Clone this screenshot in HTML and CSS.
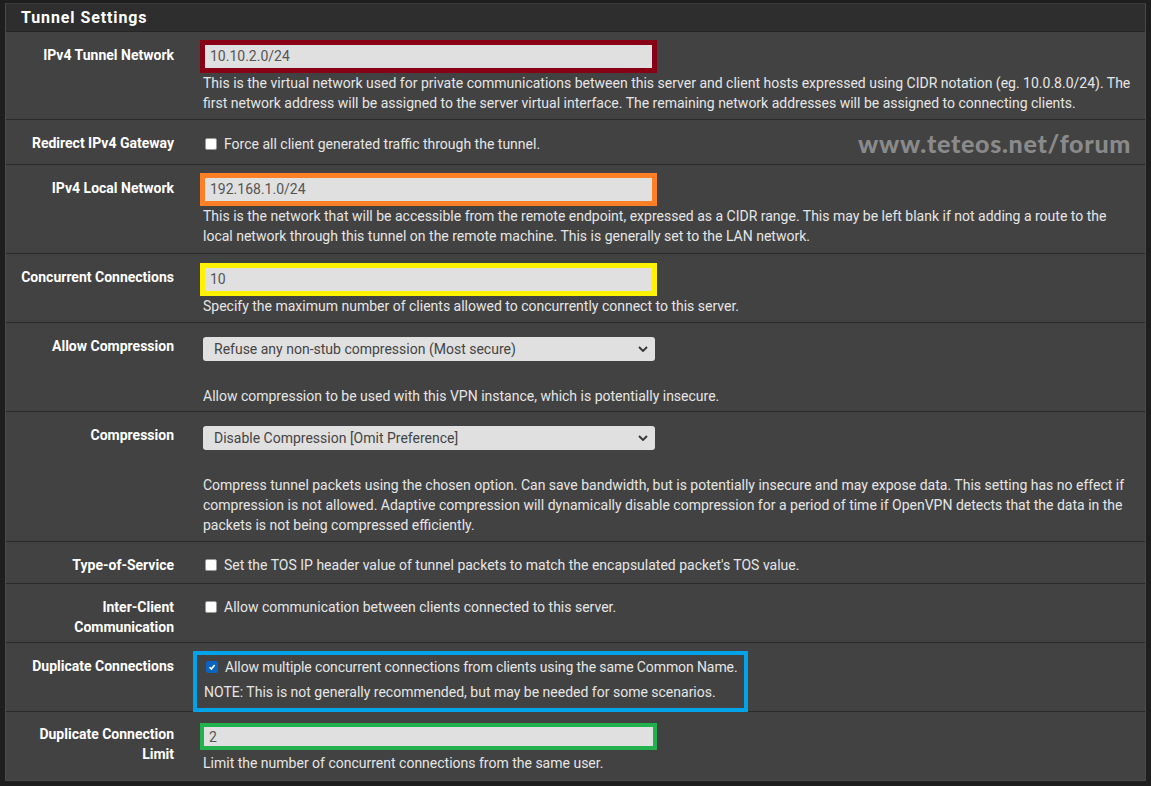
FILE: index.html
```html
<!DOCTYPE html>
<html>
<head>
<meta charset="utf-8">
<link rel="stylesheet" href="styles.css">
</head>
<body>
<div class="panel">
  <div class="panel-heading">Tunnel Settings</div>
  <div class="panel-body">
    <div class="watermark">www.teteos.net/forum</div>

    <div class="row">
      <div class="label">IPv4 Tunnel Network</div>
      <div class="field">
        <div class="mark mark-red"><div class="input">10.10.2.0/24</div></div>
        <div class="help">This is the virtual network used for private communications between this server and client hosts expressed using CIDR notation (eg. 10.0.8.0/24). The first network address will be assigned to the server virtual interface. The remaining network addresses will be assigned to connecting clients.</div>
      </div>
    </div>

    <div class="row row-check row-redirect">
      <div class="label">Redirect IPv4 Gateway</div>
      <div class="field">
        <div class="check-line"><span class="box"></span>Force all client generated traffic through the tunnel.</div>
      </div>
    </div>

    <div class="row row-local">
      <div class="label">IPv4 Local Network</div>
      <div class="field">
        <div class="mark mark-orange"><div class="input">192.168.1.0/24</div></div>
        <div class="help">This is the network that will be accessible from the remote endpoint, expressed as a CIDR range. This may be left blank if not adding a route to the local network through this tunnel on the remote machine. This is generally set to the LAN network.</div>
      </div>
    </div>

    <div class="row row-conc">
      <div class="label">Concurrent Connections</div>
      <div class="field">
        <div class="mark mark-yellow"><div class="input">10</div></div>
        <div class="help">Specify the maximum number of clients allowed to concurrently connect to this server.</div>
      </div>
    </div>

    <div class="row row-allow">
      <div class="label">Allow Compression</div>
      <div class="field">
        <div class="select"><span>Refuse any non-stub compression (Most secure)</span><svg class="chev" viewBox="0 0 10 6" width="10" height="6"><path d="M1 1l4 4 4-4" fill="none" stroke="#333" stroke-width="1.8"/></svg></div>
        <div class="help help-spaced">Allow compression to be used with this VPN instance, which is potentially insecure.</div>
      </div>
    </div>

    <div class="row">
      <div class="label">Compression</div>
      <div class="field">
        <div class="select"><span>Disable Compression [Omit Preference]</span><svg class="chev" viewBox="0 0 10 6" width="10" height="6"><path d="M1 1l4 4 4-4" fill="none" stroke="#333" stroke-width="1.8"/></svg></div>
        <div class="help help-spaced">Compress tunnel packets using the chosen option. Can save bandwidth, but is potentially insecure and may expose data. This setting has no effect if compression is not allowed. Adaptive compression will dynamically disable compression for a period of time if OpenVPN detects that the data in the packets is not being compressed efficiently.</div>
      </div>
    </div>

    <div class="row row-check">
      <div class="label">Type-of-Service</div>
      <div class="field">
        <div class="check-line"><span class="box"></span>Set the TOS IP header value of tunnel packets to match the encapsulated packet's TOS value.</div>
      </div>
    </div>

    <div class="row row-tall">
      <div class="label">Inter-Client Communication</div>
      <div class="field">
        <div class="check-line"><span class="box"></span>Allow communication between clients connected to this server.</div>
      </div>
    </div>

    <div class="row row-dup">
      <div class="label">Duplicate Connections</div>
      <div class="field">
        <div class="mark-blue">
          <div class="check-line check-tight"><span class="box box-on"><svg viewBox="0 0 12 12" width="12" height="12"><path d="M3 6.2l2.2 2.3L9.2 3.6" fill="none" stroke="#fff" stroke-width="1.8"/></svg></span>Allow multiple concurrent connections from clients using the same Common Name.</div>
          <div class="note">NOTE: This is not generally recommended, but may be needed for some scenarios.</div>
        </div>
      </div>
    </div>

    <div class="row row-last">
      <div class="label">Duplicate Connection Limit</div>
      <div class="field">
        <div class="mark mark-green"><div class="input input-short">2</div></div>
        <div class="help help-last">Limit the number of concurrent connections from the same user.</div>
      </div>
    </div>
  </div>
</div>
</body>
</html>
```

FILE: styles.css
```css
html, body {
  margin: 0;
  padding: 0;
  background: #1e1e1e;
}
body {
  padding: 3px 5px 6px 5px;
  font-family: Roboto, "Liberation Sans", sans-serif;
  font-size: 14px;
  color: #e6e6e6;
}
.panel {
  border: 1px solid #4a4a4a;
  border-top-color: #3a3a3a;
  background: #424242;
}
.panel-heading {
  background: #2e2e2e;
  color: #ffffff;
  font-weight: 700;
  font-size: 16px;
  letter-spacing: 0.9px;
  height: 27px;
  line-height: 27px;
  padding-left: 15px;
  border-bottom: 1px solid #262626;
}
.panel-body {
  position: relative;
}
.watermark {
  position: absolute;
  top: 96px;
  left: 852px;
  font-family: Lato, "DejaVu Sans", sans-serif;
  font-weight: 900;
  font-size: 25px;
  letter-spacing: 0.7px;
  color: #8a8a8a;
  line-height: 30px;
}
.row {
  display: grid;
  grid-template-columns: 183px 1fr;
  border-bottom: 1px solid #2a2a2a;
  padding: 8px 0 6px 0;
}
.label {
  text-align: right;
  font-weight: 700;
  color: #ffffff;
  padding: 5px 15px 0 8px;
  line-height: 20px;
}
.field {
  padding: 0 9px 0 14px;
  line-height: 20px;
}
.mark {
  width: 447px;
  border: 5px solid;
  margin-left: -3px;
}
.mark-red { border-color: #880015; }
.mark-orange { border-color: #ff7f27; }
.mark-yellow { border-color: #fff200; }
.mark-green { border-color: #22b14c; border-width: 4px; width: 449px; }
.input {
  background: #e0e0e0;
  color: #555555;
  height: 23px;
  line-height: 23px;
  padding-left: 5px;
  font-size: 14px;
}
.input-short {
  height: 19px;
  line-height: 21px;
}
.row-local {
  padding-bottom: 7px;
}
.row-conc .field {
  padding-top: 1px;
}
.row-conc {
  padding-bottom: 6px;
}
.row-allow {
  padding-bottom: 5px;
}
.help-spaced {
  margin-top: 25px;
}
.select {
  margin-top: 6px;
  width: 452px;
  height: 24px;
  box-sizing: border-box;
  background: #e0e0e0;
  border-radius: 3px;
  color: #444444;
  font-size: 14px;
  display: flex;
  align-items: center;
  justify-content: space-between;
  padding: 0 7px 0 11px;
}
.chev {
  display: block;
}
.check-line {
  display: flex;
  align-items: center;
  padding: 5px 0 4px 0;
  white-space: nowrap;
}
.row-check {
  padding-bottom: 4px;
}
.row-redirect {
  padding-bottom: 6px;
}
.row-redirect .check-line {
  padding-top: 6px;
}
.box {
  width: 10px;
  height: 10px;
  background: #ffffff;
  border: 1px solid #9a9a9a;
  border-radius: 2px;
  margin: 0 7px 0 2px;
  flex: none;
  display: flex;
  align-items: center;
  justify-content: center;
}
.box svg {
  display: block;
}
.box-on {
  background: #0b64c0;
  border-color: #0b64c0;
}
.row-tall {
  padding-bottom: 5px;
}
.row-dup {
  padding-bottom: 0;
}
.mark-blue {
  box-sizing: border-box;
  border: 4px solid #00a2e8;
  width: 555px;
  margin-left: -10px;
  padding: 0 0 6px 7px;
  margin-bottom: -1px;
}
.check-tight {
  padding: 2px 0 0 0;
  letter-spacing: -0.1px;
}
.note {
  padding-top: 5px;
}
.row-last {
  border-bottom: none;
  padding-bottom: 7px;
}
.row-last .field {
  padding-top: 3px;
}
.row-last .label {
  padding-top: 4px;
}
.help-last {
  margin-top: 3px;
}
```
